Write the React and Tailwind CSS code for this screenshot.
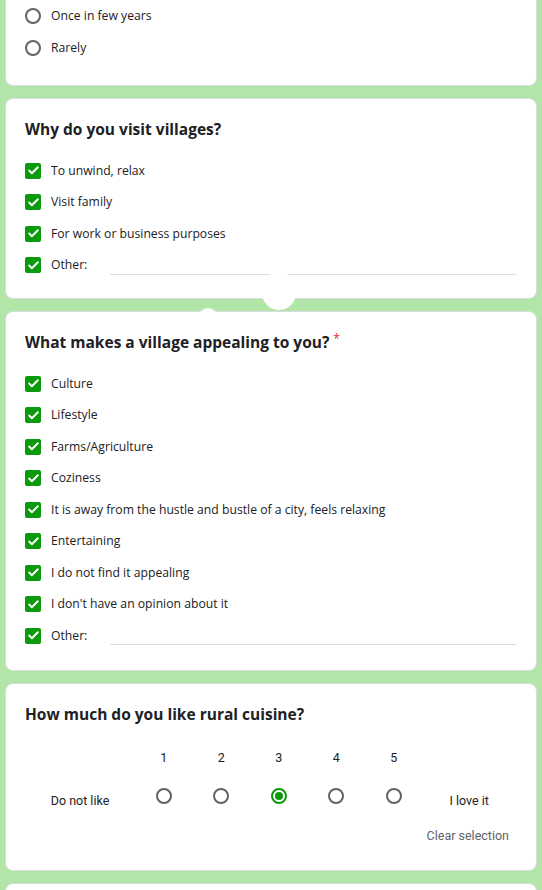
import { Check } from 'lucide-react'

const Checkbox = () => (
  <span className="flex h-4 w-4 shrink-0 items-center justify-center rounded-[2px] bg-[#0b9a0b]">
    <Check className="h-[13px] w-[13px] text-white" strokeWidth={3.5} />
  </span>
)

const Radio = ({ checked = false }) => (
  <span
    className={`flex h-4 w-4 shrink-0 items-center justify-center rounded-full border-2 ${
      checked ? 'border-[#0b9a0b]' : 'border-[#5f6368]'
    }`}
  >
    {checked && <span className="h-2 w-2 rounded-full bg-[#0b9a0b]" />}
  </span>
)

const Card = ({ children, className = '' }) => (
  <div className={`relative rounded-lg border border-[#dadce0] bg-white pl-[19px] pr-5 ${className}`}>
    {children}
  </div>
)

const Title = ({ children, required }) => (
  <h2 className="h-[22px] text-[15.5px] font-bold leading-[22px] text-[#202124]">
    {children}
    {required && <span className="ml-1 align-top text-[12px] font-normal leading-[16px] text-[#d93025]">*</span>}
  </h2>
)

const CheckRow = ({ label }) => (
  <div className="flex h-[31.5px] items-center gap-[10px]">
    <Checkbox />
    <span className="text-[12.2px] text-[#202124]">{label}</span>
  </div>
)

const OtherRow = () => (
  <div className="flex h-[31.5px] items-center">
    <Checkbox />
    <span className="ml-[10px] w-[59px] text-[12.2px] text-[#202124]">Other:</span>
    <div className="mt-[18px] h-px flex-1 bg-[#dadce0]" />
  </div>
)

const reasons = ['To unwind, relax', 'Visit family', 'For work or business purposes']

const appeals = [
  'Culture',
  'Lifestyle',
  'Farms/Agriculture',
  'Coziness',
  'It is away from the hustle and bustle of a city, feels relaxing',
  'Entertaining',
  'I do not find it appealing',
  "I don't have an opinion about it",
]

export default function App() {
  return (
    <div
      className="relative min-h-[890px] overflow-hidden bg-[#b1e6a8] px-[5px] pb-5"
      style={{ fontFamily: '"Open Sans", "Noto Sans", sans-serif' }}
    >
      {/* frequency question, scrolled past its top */}
      <Card className="rounded-t-none border-t-0 pb-[21px]">
        {['Once in few years', 'Rarely'].map((o) => (
          <div key={o} className="flex h-8 items-center gap-[10px]">
            <Radio />
            <span className="text-[12.2px] text-[#202124]">{o}</span>
          </div>
        ))}
      </Card>

      <Card className="mt-3 pb-[17px] pt-[19px]">
        <Title>Why do you visit villages?</Title>
        <div className="mt-[15px]">
          {reasons.map((r) => (
            <CheckRow key={r} label={r} />
          ))}
          <OtherRow />
        </div>
      </Card>

      <Card className="mt-3 pb-[18px] pt-[19px]">
        <Title required>What makes a village appealing to you?</Title>
        <div className="mt-[15px]">
          {appeals.map((a) => (
            <CheckRow key={a} label={a} />
          ))}
          <OtherRow />
        </div>
      </Card>

      <Card className="mt-3 pb-[25px] pt-[19px]">
        <Title>How much do you like rural cuisine?</Title>
        <div className="mt-[21px] flex" style={{ fontFamily: 'Roboto, "Liberation Sans", sans-serif' }}>
          <div className="flex w-[110px] flex-col">
            <div className="h-[26px]" />
            <div className="flex h-[48px] items-center justify-center pt-[12px] text-[12.5px] text-[#202124]">
              Do not like
            </div>
          </div>
          {[1, 2, 3, 4, 5].map((n) => (
            <div key={n} className="flex w-[57.5px] flex-col items-center">
              <div className="flex h-[26px] items-center text-[12.5px] text-[#202124]">{n}</div>
              <div className="flex h-[48px] items-center">
                <Radio checked={n === 3} />
              </div>
            </div>
          ))}
          <div className="flex flex-1 flex-col">
            <div className="h-[26px]" />
            <div className="flex h-[48px] items-center justify-center pt-[12px] text-[12.5px] text-[#202124]">
              I love it
            </div>
          </div>
        </div>
        <div
          className="mt-[7px] flex justify-end pr-[7px] text-[12.5px] leading-[18px] text-[#5f6368]"
          style={{ fontFamily: 'Roboto, "Liberation Sans", sans-serif' }}
        >
          Clear selection
        </div>
      </Card>

      <Card className="mt-3 h-16 rounded-b-none" />

      {/* stray white blobs over the gap */}
      <div className="absolute left-[262px] top-[272px] h-[38px] w-[34px] rounded-full bg-white" />
      <div className="absolute left-[198px] top-[308px] h-[20px] w-[20px] rounded-full bg-white" />
    </div>
  )
}
